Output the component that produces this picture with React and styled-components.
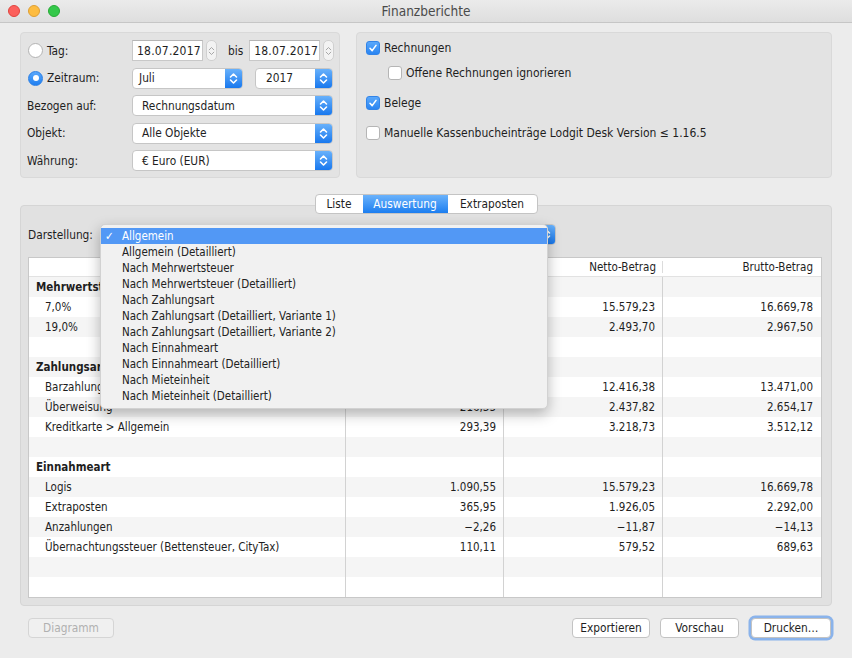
import React from "react";
import styled, { createGlobalStyle } from "styled-components";

const FONT = `"DejaVu Sans Condensed", "Liberation Sans", sans-serif`;

const GlobalStyle = createGlobalStyle`
  html, body {
    margin: 0;
    background: #ececec;
    font-family: ${FONT};
    color: #1e1e1e;
  }
`;

const Window = styled.div`
  width: 852px;
  height: 658px;
  background: #ececec;
  display: flex;
  flex-direction: column;
  overflow: hidden;
`;

const TitleBar = styled.div`
  height: 22px;
  display: grid;
  grid-template-columns: 1fr auto 1fr;
  align-items: center;
  background: linear-gradient(#ebebeb, #dedede);
  border-bottom: 1px solid #c6c6c6;
`;

const Lights = styled.div`
  display: flex;
  gap: 8px;
  padding-left: 8px;
`;

const Light = styled.span`
  width: 12px;
  height: 12px;
  border-radius: 50%;
  box-sizing: border-box;
  background: ${(p) => p.$color};
  border: 1px solid ${(p) => p.$edge};
`;

const Title = styled.div`
  font-size: 13.5px;
  color: #4a4a4a;
`;

const Content = styled.div`
  padding: 9px 20px 0 20px;
  display: flex;
  flex-direction: column;
`;

const TopRow = styled.div`
  display: flex;
  gap: 16px;
  height: 146px;
`;

const GroupBox = styled.div`
  box-sizing: border-box;
  background: #e3e3e3;
  border: 1px solid #d9d9d9;
  border-radius: 4px;
  width: ${(p) => p.$width || "auto"};
  flex: ${(p) => (p.$width ? "none" : 1)};
`;

const FormGrid = styled.div`
  display: grid;
  grid-template-columns: 105px 1fr;
  grid-auto-rows: 21px;
  row-gap: 6.6px;
  padding: 7px 6px 0 6px;
  font-size: 11.8px;
`;

const Label = styled.div`
  display: flex;
  align-items: center;
  gap: 4px;
  margin-left: ${(p) => (p.$radio ? "1px" : "0")};
`;

const Radio = styled.span`
  width: 15px;
  height: 15px;
  box-sizing: border-box;
  border-radius: 50%;
  display: inline-flex;
  align-items: center;
  justify-content: center;
  background: ${(p) => (p.$on ? "linear-gradient(#5aa8fb, #1f7ff1)" : "#fff")};
  border: 1px solid ${(p) => (p.$on ? "#2a7fe6" : "#b3b3b3")};
  &::after {
    content: "";
    width: 6px;
    height: 6px;
    border-radius: 50%;
    background: ${(p) => (p.$on ? "#fff" : "transparent")};
  }
`;

const Controls = styled.div`
  display: flex;
  align-items: center;
`;

const DateField = styled.div`
  width: 71px;
  height: 21px;
  box-sizing: border-box;
  background: #fff;
  border: 1px solid #c8c8c8;
  border-top-color: #b5b5b5;
  font-size: 12px;
  letter-spacing: 0.2px;
  display: flex;
  align-items: center;
  padding-left: 4px;
  white-space: nowrap;
  overflow: hidden;
`;

const StepperBox = styled.div`
  width: 11px;
  height: 21px;
  box-sizing: border-box;
  border: 1px solid #d0d0d0;
  border-radius: 5px;
  background: #f3f3f3;
  margin-left: 3px;
  display: flex;
  align-items: center;
  justify-content: center;
`;

const Bis = styled.span`
  margin: 0 6px 0 11px;
`;

const PopupBox = styled.div`
  width: ${(p) => p.$width};
  height: 21px;
  box-sizing: border-box;
  background: #fff;
  border: 1px solid #c6c6c6;
  border-radius: 4px;
  display: flex;
  align-items: stretch;
  font-size: 11.8px;
  margin-left: ${(p) => p.$ml || "0px"};
  overflow: hidden;
`;

const PopupText = styled.span`
  flex: 1;
  display: flex;
  align-items: center;
  padding-left: ${(p) => p.$pad || "9px"};
`;

const PopupArrow = styled.span`
  width: 17px;
  background: linear-gradient(#68b1fb, #1878ee);
  display: flex;
  align-items: center;
  justify-content: center;
`;

const Chevrons = ({ color = "#fff", w = 9, h = 13, sw = 1.6 }) => (
  <svg width={w} height={h} viewBox="0 0 9 13">
    <path d="M1.5 5 L4.5 2 L7.5 5 M1.5 8 L4.5 11 L7.5 8" fill="none" stroke={color} strokeWidth={sw} strokeLinecap="round" strokeLinejoin="round" />
  </svg>
);

const Stepper = () => (
  <StepperBox>
    <Chevrons color="#9a9a9a" w={7} h={14} sw={1.1} />
  </StepperBox>
);

const Popup = ({ width, children, ml, pad }) => (
  <PopupBox $width={width} $ml={ml}>
    <PopupText $pad={pad}>{children}</PopupText>
    <PopupArrow>
      <Chevrons />
    </PopupArrow>
  </PopupBox>
);

const CheckList = styled.div`
  display: flex;
  flex-direction: column;
  padding: 8px 9px 0;
  font-size: 12px;
`;

const CheckRow = styled.div`
  display: flex;
  align-items: center;
  gap: 4px;
  height: 14px;
  margin-top: ${(p) => p.$top || "0px"};
  margin-left: ${(p) => (p.$indent ? "22px" : "0")};
`;

const Box = styled.span`
  width: 14px;
  height: 14px;
  box-sizing: border-box;
  border-radius: 3px;
  display: inline-flex;
  align-items: center;
  justify-content: center;
  background: ${(p) => (p.$on ? "linear-gradient(#5aa8fb, #2a85f2)" : "#fff")};
  border: 1px solid ${(p) => (p.$on ? "#3284e8" : "#b5b5b5")};
`;

const Check = ({ on }) => (
  <Box $on={on}>
    {on && (
      <svg width="10" height="10" viewBox="0 0 10 10">
        <path d="M2 5.3 L4.2 7.6 L8 2.4" fill="none" stroke="#fff" strokeWidth="1.6" strokeLinecap="round" strokeLinejoin="round" />
      </svg>
    )}
  </Box>
);

const Segmented = styled.div`
  align-self: center;
  margin-top: 16px;
  height: 20px;
  box-sizing: border-box;
  display: flex;
  background: #fff;
  border: 1px solid #c4c4c4;
  border-radius: 4px;
  overflow: hidden;
  position: relative;
  z-index: 1;
  font-size: 11.8px;
`;

const Segment = styled.div`
  width: ${(p) => p.$width};
  display: flex;
  align-items: center;
  justify-content: center;
  color: ${(p) => (p.$active ? "#fff" : "#1e1e1e")};
  background: ${(p) => (p.$active ? "linear-gradient(#6ab2fb, #1c7ef0)" : "transparent")};
`;

const TabBox = styled.div`
  margin-top: -9px;
  height: 401px;
  box-sizing: border-box;
  background: #e1e1e1;
  border: 1px solid #d5d5d5;
  border-radius: 4px;
  padding: 18px 9px 0 7px;
  display: flex;
  flex-direction: column;
`;

const ShowRow = styled.div`
  display: flex;
  align-items: center;
  gap: 8px;
  height: 21px;
  font-size: 11.8px;
  position: relative;
`;

const Menu = styled.div`
  position: absolute;
  left: 72px;
  top: 0;
  width: 448px;
  box-sizing: border-box;
  padding: 3px 0 4px;
  background: #f1f1f1;
  border: 1px solid #d2d2d2;
  border-radius: 5px;
  box-shadow: 0 5px 14px rgba(0, 0, 0, 0.28);
  font-size: 11.5px;
  z-index: 5;
`;

const MenuItem = styled.div`
  height: 16px;
  display: flex;
  align-items: center;
  padding-left: 21px;
  position: relative;
  color: ${(p) => (p.$active ? "#fff" : "#222")};
  background: ${(p) => (p.$active ? "#5298f5" : "transparent")};
`;

const Tick = styled.span`
  position: absolute;
  left: 4px;
`;

const Table = styled.div`
  margin-top: 12px;
  background: #fff;
  border: 1px solid #c8c8c8;
  font-size: 11.5px;
`;

const TRow = styled.div`
  display: grid;
  grid-template-columns: 317px 158px 159px 1fr;
  height: ${(p) => (p.$header ? "18px" : "20px")};
  background: ${(p) => (p.$shade ? "#f5f5f5" : "#fff")};
  border-bottom: ${(p) => (p.$header ? "1px solid #e2e2e2" : "none")};
`;

const Cell = styled.div`
  display: flex;
  align-items: center;
  justify-content: ${(p) => (p.$num ? "flex-end" : "flex-start")};
  padding: ${(p) => (p.$num ? (p.$last ? "0 8px 0 0" : "0 7px 0 0") : p.$indent ? "0 0 0 16px" : "0 0 0 7px")};
  font-weight: ${(p) => (p.$bold ? "bold" : "normal")};
  border-right: ${(p) => (p.$last ? "none" : "1px solid #d2d2d2")};
  white-space: nowrap;
  overflow: hidden;
`;

const HeadCell = styled(Cell)`
  border-right: none;
  position: relative;
  &::after {
    content: "";
    position: absolute;
    right: 0;
    top: 3px;
    bottom: 3px;
    width: 1px;
    background: ${(p) => (p.$last ? "transparent" : "#dcdcdc")};
  }
`;

const BottomBar = styled.div`
  margin-top: 12px;
  height: 20px;
  display: flex;
  align-items: center;
  padding: 0 1px 0 8px;
`;

const Spacer = styled.div`
  flex: 1;
`;

const Button = styled.div`
  width: ${(p) => p.$width};
  height: 20px;
  box-sizing: border-box;
  display: flex;
  align-items: center;
  justify-content: center;
  font-size: 11.8px;
  border-radius: 4px;
  margin-left: ${(p) => p.$ml || "0px"};
  background: ${(p) => (p.$disabled ? "#f0f0f0" : "#fff")};
  color: ${(p) => (p.$disabled ? "#b0b0b0" : "#1e1e1e")};
  border: 1px solid ${(p) => (p.$disabled ? "#d5d5d5" : "#c3c3c3")};
  box-shadow: ${(p) => (p.$focus ? "0 0 0 2.5px rgba(105, 160, 235, 0.75)" : "none")};
`;

const menuItems = [
  "Allgemein",
  "Allgemein (Detailliert)",
  "Nach Mehrwertsteuer",
  "Nach Mehrwertsteuer (Detailliert)",
  "Nach Zahlungsart",
  "Nach Zahlungsart (Detailliert, Variante 1)",
  "Nach Zahlungsart (Detailliert, Variante 2)",
  "Nach Einnahmeart",
  "Nach Einnahmeart (Detailliert)",
  "Nach Mieteinheit",
  "Nach Mieteinheit (Detailliert)",
];

const rows = [
  { label: "Mehrwertsteuer", head: true },
  { label: "7,0%", v: ["1.090,55", "15.579,23", "16.669,78"] },
  { label: "19,0%", v: ["473,80", "2.493,70", "2.967,50"] },
  {},
  { label: "Zahlungsart", head: true },
  { label: "Barzahlung", v: ["1.054,62", "12.416,38", "13.471,00"] },
  { label: "Überweisung", v: ["216,35", "2.437,82", "2.654,17"] },
  { label: "Kreditkarte > Allgemein", v: ["293,39", "3.218,73", "3.512,12"] },
  {},
  { label: "Einnahmeart", head: true },
  { label: "Logis", v: ["1.090,55", "15.579,23", "16.669,78"] },
  { label: "Extraposten", v: ["365,95", "1.926,05", "2.292,00"] },
  { label: "Anzahlungen", v: ["−2,26", "−11,87", "−14,13"] },
  { label: "Übernachtungssteuer (Bettensteuer, CityTax)", v: ["110,11", "579,52", "689,63"] },
  {},
  {},
];

export default function App() {
  return (
    <>
      <GlobalStyle />
      <Window>
        <TitleBar>
          <Lights>
            <Light $color="#fc605c" $edge="#e0443e" />
            <Light $color="#fdbc40" $edge="#de9f34" />
            <Light $color="#34c84a" $edge="#27aa35" />
          </Lights>
          <Title>Finanzberichte</Title>
          <div />
        </TitleBar>

        <Content>
          <TopRow>
            <GroupBox $width="320px">
              <FormGrid>
                <Label $radio>
                  <Radio />
                  Tag:
                </Label>
                <Controls>
                  <DateField>18.07.2017</DateField>
                  <Stepper />
                  <Bis>bis</Bis>
                  <DateField>18.07.2017</DateField>
                  <Stepper />
                </Controls>

                <Label $radio>
                  <Radio $on />
                  Zeitraum:
                </Label>
                <Controls>
                  <Popup width="111px" pad="6px">Juli</Popup>
                  <Popup width="78px" ml="12px" pad="10px">2017</Popup>
                </Controls>

                <Label>Bezogen auf:</Label>
                <Controls>
                  <Popup width="201px">Rechnungsdatum</Popup>
                </Controls>

                <Label>Objekt:</Label>
                <Controls>
                  <Popup width="201px">Alle Objekte</Popup>
                </Controls>

                <Label>Währung:</Label>
                <Controls>
                  <Popup width="201px">€ Euro (EUR)</Popup>
                </Controls>
              </FormGrid>
            </GroupBox>

            <GroupBox>
              <CheckList>
                <CheckRow>
                  <Check on />
                  Rechnungen
                </CheckRow>
                <CheckRow $indent $top="11px">
                  <Check />
                  Offene Rechnungen ignorieren
                </CheckRow>
                <CheckRow $top="16px">
                  <Check on />
                  Belege
                </CheckRow>
                <CheckRow $top="16px">
                  <Check />
                  Manuelle Kassenbucheinträge Lodgit Desk Version ≤ 1.16.5
                </CheckRow>
              </CheckList>
            </GroupBox>
          </TopRow>

          <Segmented>
            <Segment $width="47px">Liste</Segment>
            <Segment $width="85px" $active>Auswertung</Segment>
            <Segment $width="89px">Extraposten</Segment>
          </Segmented>

          <TabBox>
            <ShowRow>
              Darstellung:
              <Popup width="455px" />
              <Menu>
                {menuItems.map((m, i) => (
                  <MenuItem key={m} $active={i === 0}>
                    {i === 0 && <Tick>✓</Tick>}
                    {m}
                  </MenuItem>
                ))}
              </Menu>
            </ShowRow>

            <Table>
              <TRow $header>
                <HeadCell />
                <HeadCell />
                <HeadCell $num>Netto-Betrag</HeadCell>
                <HeadCell $num $last>Brutto-Betrag</HeadCell>
              </TRow>
              {rows.map((r, i) => (
                <TRow key={i} $shade={i % 2 === 0}>
                  <Cell $bold={r.head} $indent={r.v}>{r.label}</Cell>
                  <Cell $num>{r.v && r.v[0]}</Cell>
                  <Cell $num>{r.v && r.v[1]}</Cell>
                  <Cell $num $last>{r.v && r.v[2]}</Cell>
                </TRow>
              ))}
            </Table>
          </TabBox>

          <BottomBar>
            <Button $width="86px" $disabled>Diagramm</Button>
            <Spacer />
            <Button $width="78px">Exportieren</Button>
            <Button $width="79px" $ml="10px">Vorschau</Button>
            <Button $width="80px" $ml="12px" $focus>Drucken…</Button>
          </BottomBar>
        </Content>
      </Window>
    </>
  );
}
